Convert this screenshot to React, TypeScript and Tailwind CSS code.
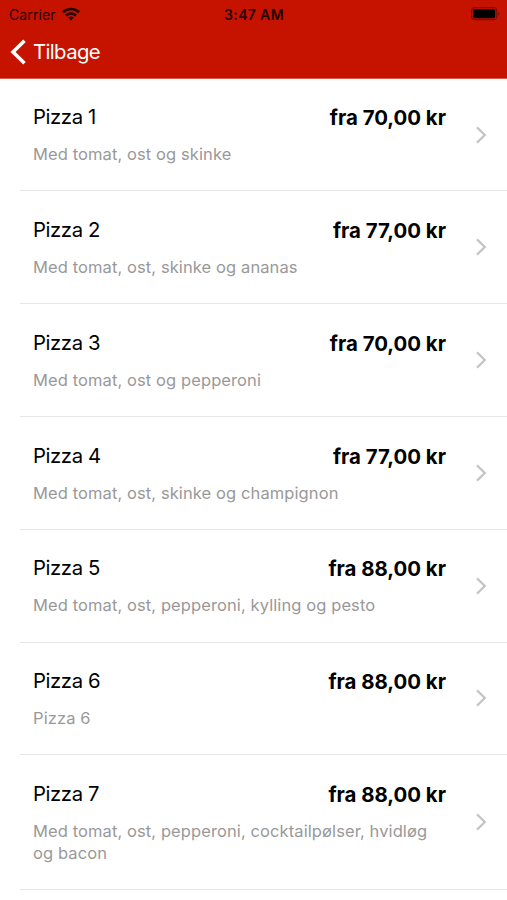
import React from 'react';

interface Pizza {
  name: string;
  price: string;
  description: string;
}

const pizzas: Pizza[] = [
  { name: 'Pizza 1', price: 'fra 70,00 kr', description: 'Med tomat, ost og skinke' },
  { name: 'Pizza 2', price: 'fra 77,00 kr', description: 'Med tomat, ost, skinke og ananas' },
  { name: 'Pizza 3', price: 'fra 70,00 kr', description: 'Med tomat, ost og pepperoni' },
  { name: 'Pizza 4', price: 'fra 77,00 kr', description: 'Med tomat, ost, skinke og champignon' },
  { name: 'Pizza 5', price: 'fra 88,00 kr', description: 'Med tomat, ost, pepperoni, kylling og pesto' },
  { name: 'Pizza 6', price: 'fra 88,00 kr', description: 'Pizza 6' },
  { name: 'Pizza 7', price: 'fra 88,00 kr', description: 'Med tomat, ost, pepperoni, cocktailpølser, hvidløg og bacon' },
];

const WifiIcon = () => (
  <svg width="18" height="14" viewBox="0 0 18 14" fill="none" stroke="#240200" strokeWidth="2.6">
    <path d="M1 5.2C5.4 0.9 12.6 0.9 17 5.2" />
    <path d="M4 8.5C6.8 5.8 11.2 5.8 14 8.5" />
    <path d="M9 13.4L6.2 10.6C7.8 9.2 10.2 9.2 11.8 10.6Z" fill="#240200" stroke="none" />
  </svg>
);

const BatteryIcon = () => (
  <svg width="30" height="14" viewBox="0 0 30 14" fill="none">
    <rect x="0.7" y="0.7" width="25" height="12" rx="3.2" stroke="#840b00" strokeWidth="1.2" />
    <rect x="2.2" y="2.2" width="22" height="9" rx="1.6" fill="#000" />
    <path d="M27.2 4.8C28.8 5.4 28.8 8 27.2 8.6Z" fill="#840b00" />
  </svg>
);

const Header = () => (
  <header className="h-[79px] bg-[#c61300] border-b border-[#d85a4d]">
    <div className="grid h-7 grid-cols-3 items-center pl-[9px] pr-[6px] text-[#240200]">
      <div className="flex items-center gap-[6px]">
        <span className="text-[14px] tracking-[0.1px]">Carrier</span>
        <WifiIcon />
      </div>
      <span className="pr-[2px] text-center text-[14px] font-semibold tracking-[0.35px]">3:47 AM</span>
      <div className="flex justify-end">
        <BatteryIcon />
      </div>
    </div>
    <button className="flex h-[47px] items-center gap-[7px] pl-[10px] text-[20.3px] tracking-[-0.6px] text-white">
      <svg width="16" height="26" viewBox="0 0 16 26" fill="none" stroke="currentColor" strokeWidth="3.6">
        <path d="M14.5 1.8L3 13L14.5 24.2" />
      </svg>
      <span className="pt-px">Tilbage</span>
    </button>
  </header>
);

const PizzaRow: React.FC<{ pizza: Pizza }> = ({ pizza }) => (
  <li className="ml-5 flex items-center border-b border-[#e6e6e6] pl-[13px] pr-5">
    <div className="w-[413px] pt-[23.5px] pb-[25.3px]">
      <div className="flex items-start justify-between">
        <h2 className="text-[20.3px] leading-[30px] tracking-[-0.4px] text-black">{pizza.name}</h2>
        <span className="pt-px text-[20.4px] leading-[30px] font-bold text-black">{pizza.price}</span>
      </div>
      <p className="mt-[10px] text-[16.5px] leading-[22px] tracking-[0.1px] text-[#999]">{pizza.description}</p>
    </div>
    <svg className="ml-auto" width="12" height="18" viewBox="0 0 12 18" fill="none" stroke="#c4c4c6" strokeWidth="2.2">
      <path d="M2 1.4L9.8 9L2 16.6" />
    </svg>
  </li>
);

export default function App() {
  return (
    <main className="h-[900px] w-[507px] overflow-hidden bg-white font-['Inter','Liberation_Sans',sans-serif]">
      <Header />
      <ul className="-mt-[0.4px]">
        {pizzas.map((pizza) => (
          <PizzaRow key={pizza.name} pizza={pizza} />
        ))}
      </ul>
    </main>
  );
}
